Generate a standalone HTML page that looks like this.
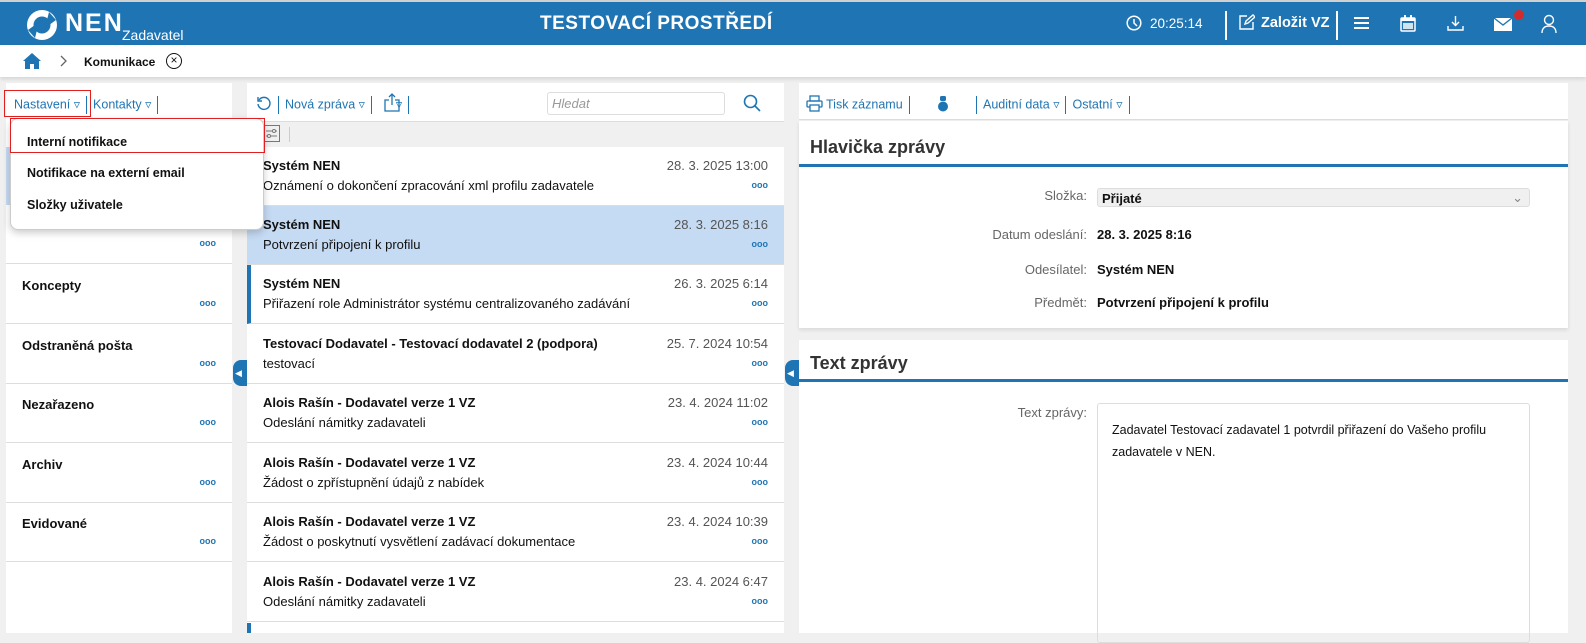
<!DOCTYPE html>
<html><head><meta charset="utf-8"><style>
*{box-sizing:border-box;margin:0;padding:0}
body{width:1586px;height:633px;overflow:hidden;background:#f0f0f0;font-family:"Liberation Sans",Arial,sans-serif;font-size:13px;color:#111;position:relative}
.abs{position:absolute}
.top{left:0;top:0;width:1586px;height:45px;background:#1f75b3;color:#fff;border-top:2px solid #d0d0d0}
.bc{left:0;top:45px;width:1586px;height:32px;background:#fff;box-shadow:0 2px 4px rgba(0,0,0,.12)}
.panel{background:#fff}
.link{color:#1f75b3}
.sep{display:inline-block;width:1px;height:18px;background:#1f75b3;vertical-align:middle;margin:0 6px}
.fold{left:6px;width:226px;height:59px;border-bottom:1px solid #ddd;background:#fff}
.fold b{position:absolute;left:16px;top:13px;font-size:13px}
.dots{position:absolute;color:#1f75b3;font-size:9px;font-weight:bold}
.msg{left:247px;width:537px;height:59px;border-bottom:1px solid #ddd;background:#fff}
.msg b{position:absolute;left:16px;top:11px}
.msg .d{position:absolute;right:16px;top:11px;color:#555}
.msg .s{position:absolute;left:16px;top:31px}
.lab{position:absolute;right:0;color:#666;text-align:right}
</style></head><body>
<div class="abs top">
 <svg class="abs" style="left:25px;top:6px" width="34" height="34" viewBox="0 0 34 34"><circle cx="17" cy="17" r="15" fill="#fff"/><circle cx="17" cy="17" r="8.5" fill="#1f75b3"/><path d="M3 22 L14 14 L10 30Z M31 12 L20 20 L24 4Z" fill="#1f75b3"/></svg>
 <div class="abs" style="left:65px;top:7px;font-size:25px;font-weight:bold;letter-spacing:2px">NEN</div>
 <div class="abs" style="left:122px;top:25px;font-size:14px">Zadavatel</div>
 <div class="abs" style="left:540px;top:11px;font-size:19px;font-weight:bold;letter-spacing:.5px">TESTOVACÍ PROSTŘEDÍ</div>
 <svg class="abs" style="left:1126px;top:13px" width="16" height="16" viewBox="0 0 16 16" fill="none" stroke="#fff" stroke-width="1.5"><circle cx="8" cy="8" r="6.8"/><path d="M8 4v4l3 3"/></svg>
 <div class="abs" style="left:1150px;top:14px;font-size:13.5px">20:25:14</div>
 <div class="abs" style="left:1225px;top:9px;width:2px;height:29px;background:#fff"></div>
 <svg class="abs" style="left:1238px;top:12px" width="17" height="17" viewBox="0 0 17 17" fill="none" stroke="#fff" stroke-width="1.4"><path d="M9 2H2v13h13V8"/><path d="M7 10l1-3 7-6 2 2-7 6z"/></svg>
 <div class="abs" style="left:1261px;top:13px;font-size:14.5px;font-weight:bold;white-space:nowrap">Založit VZ</div>
 <div class="abs" style="left:1336px;top:9px;width:2px;height:29px;background:#fff"></div>
 <div class="abs" style="left:1354px;top:15px;width:15px;height:2px;background:#fff;box-shadow:0 5px 0 #fff,0 10px 0 #fff"></div>
 <svg class="abs" style="left:1400px;top:13px" width="16" height="17" viewBox="0 0 16 17" fill="#fff"><rect x="1" y="3" width="14" height="13" rx="1" fill="none" stroke="#fff" stroke-width="1.5"/><rect x="1" y="3" width="14" height="3"/><rect x="4" y="0" width="2" height="4"/><rect x="10" y="0" width="2" height="4"/><rect x="3" y="8" width="10" height="6" fill="#fff" opacity=".8"/></svg>
 <svg class="abs" style="left:1447px;top:13px" width="17" height="17" viewBox="0 0 17 17" fill="none" stroke="#fff" stroke-width="1.4"><path d="M8.5 1v9M5 7l3.5 3.5L12 7M1 11v4h15v-4"/></svg>
 <svg class="abs" style="left:1494px;top:16px" width="18" height="13" viewBox="0 0 18 13"><rect width="18" height="13" fill="#fff"/><path d="M0 0l9 7 9-7" fill="none" stroke="#1f75b3" stroke-width="1.3"/></svg>
 <div class="abs" style="left:1514px;top:8px;width:10px;height:10px;border-radius:50%;background:#d32b2b"></div>
 <svg class="abs" style="left:1541px;top:12px" width="16" height="20" viewBox="0 0 16 20" fill="none" stroke="#fff" stroke-width="1.4"><circle cx="8" cy="6" r="4.5"/><path d="M1 19c0-5 3-7 7-7s7 2 7 7"/></svg>
</div>
<div class="abs bc">
 <svg class="abs" style="left:23px;top:8px" width="18" height="16" viewBox="0 0 18 16"><path d="M9 0L0 8h2v8h5v-5h4v5h5V8h2z" fill="#1f75b3"/></svg>
 <svg class="abs" style="left:60px;top:10px" width="8" height="12" viewBox="0 0 8 12" fill="none" stroke="#666" stroke-width="1.3"><path d="M1 1l5 5-5 5"/></svg>
 <div class="abs" style="left:84px;top:10px;font-weight:bold;font-size:12px">Komunikace</div>
 <div class="abs" style="left:166px;top:8px;width:16px;height:16px;border:1.5px solid #111;border-radius:50%;font-size:12px;text-align:center;line-height:12px">×</div>
</div>

<div class="abs panel" style="left:6px;top:83px;width:226px;height:550px"></div>
<div class="abs" style="left:4px;top:90px;width:87px;height:27px;border:1px solid #e02020"></div>
<div class="abs link" style="left:14px;top:96px;font-size:12.5px">Nastavení ▿<span class="sep"></span>Kontakty ▿<span class="sep"></span></div>
<div class="abs" style="left:6px;top:147px;width:226px;height:58px;background:#c5daf3"></div>
<div class="abs fold" style="top:205px"><span class="dots" style="right:16px;top:33px">ooo</span></div>
<div class="abs fold" style="top:265px"><b>Koncepty</b><span class="dots" style="right:16px;top:33px">ooo</span></div>
<div class="abs fold" style="top:325px"><b>Odstraněná pošta</b><span class="dots" style="right:16px;top:33px">ooo</span></div>
<div class="abs fold" style="top:384px"><b>Nezařazeno</b><span class="dots" style="right:16px;top:33px">ooo</span></div>
<div class="abs fold" style="top:444px"><b>Archiv</b><span class="dots" style="right:16px;top:33px">ooo</span></div>
<div class="abs fold" style="top:503px"><b>Evidované</b><span class="dots" style="right:16px;top:33px">ooo</span></div>

<div class="abs panel" style="left:247px;top:83px;width:537px;height:550px"></div>
<svg class="abs" style="left:256px;top:95px" width="16" height="16" viewBox="0 0 16 16" fill="none" stroke="#1f75b3" stroke-width="1.4"><path d="M3 5a6 6 0 1 1-1 4"/><path d="M2 2v4h4"/></svg>
<div class="abs link" style="left:278px;top:96px;font-size:12.5px"><span class="sep" style="margin-left:0"></span>Nová zpráva ▿<span class="sep"></span><span style="display:inline-block;width:18px"></span>▿<span class="sep"></span></div>
<svg class="abs" style="left:384px;top:93px" width="16" height="19" viewBox="0 0 16 19" fill="none" stroke="#1f75b3" stroke-width="1.3"><path d="M5 7H1v11h14V7h-4M8 12V1M5 4l3-3 3 3"/></svg>
<div class="abs" style="left:547px;top:92px;width:178px;height:23px;border:1px solid #ddd;border-radius:3px;color:#999;font-style:italic;padding:3px 4px">Hledat</div>
<svg class="abs" style="left:743px;top:94px" width="18" height="18" viewBox="0 0 18 18" fill="none" stroke="#1f75b3" stroke-width="1.6"><circle cx="7.5" cy="7.5" r="6"/><path d="M12 12l5 5"/></svg>
<div class="abs" style="left:247px;top:121px;width:537px;height:26px;background:#f0f0f0;border-top:1px solid #ddd"></div>
<svg class="abs" style="left:263px;top:125px" width="17" height="17" viewBox="0 0 17 17" fill="none" stroke="#777" stroke-width="1"><rect x=".5" y=".5" width="16" height="16"/><path d="M3 6h11M3 11h11"/><circle cx="11" cy="6" r="1.5" fill="#fff"/><circle cx="6" cy="11" r="1.5" fill="#fff"/></svg>
<div class="abs" style="left:289px;top:127px;width:1px;height:15px;background:#ccc"></div>
<div class="abs msg" style="top:147px"><b>Systém NEN</b><span class="d">28. 3. 2025 13:00</span><span class="s">Oznámení o dokončení zpracování xml profilu zadavatele</span><span class="dots" style="right:16px;top:33px">ooo</span></div>
<div class="abs msg" style="top:206px;background:#c5daf3"><b>Systém NEN</b><span class="d">28. 3. 2025 8:16</span><span class="s">Potvrzení připojení k profilu</span><span class="dots" style="right:16px;top:33px">ooo</span></div>
<div class="abs msg" style="top:265px;border-left:4px solid #1f75b3"><b style="left:12px">Systém NEN</b><span class="d">26. 3. 2025 6:14</span><span class="s" style="left:12px">Přiřazení role Administrátor systému centralizovaného zadávání</span><span class="dots" style="right:16px;top:33px">ooo</span></div>
<div class="abs msg" style="top:325px"><b>Testovací Dodavatel - Testovací dodavatel 2 (podpora)</b><span class="d">25. 7. 2024 10:54</span><span class="s">testovací</span><span class="dots" style="right:16px;top:33px">ooo</span></div>
<div class="abs msg" style="top:384px"><b>Alois Rašín - Dodavatel verze 1 VZ</b><span class="d">23. 4. 2024 11:02</span><span class="s">Odeslání námitky zadavateli</span><span class="dots" style="right:16px;top:33px">ooo</span></div>
<div class="abs msg" style="top:444px"><b>Alois Rašín - Dodavatel verze 1 VZ</b><span class="d">23. 4. 2024 10:44</span><span class="s">Žádost o zpřístupnění údajů z nabídek</span><span class="dots" style="right:16px;top:33px">ooo</span></div>
<div class="abs msg" style="top:503px"><b>Alois Rašín - Dodavatel verze 1 VZ</b><span class="d">23. 4. 2024 10:39</span><span class="s">Žádost o poskytnutí vysvětlení zadávací dokumentace</span><span class="dots" style="right:16px;top:33px">ooo</span></div>
<div class="abs msg" style="top:563px"><b>Alois Rašín - Dodavatel verze 1 VZ</b><span class="d">23. 4. 2024 6:47</span><span class="s">Odeslání námitky zadavateli</span><span class="dots" style="right:16px;top:33px">ooo</span></div>
<div class="abs" style="left:247px;top:623px;width:4px;height:10px;background:#1f75b3"></div>

<div class="abs" style="left:233px;top:360px;width:14px;height:26px;background:#1f75b3;border-radius:8px 0 0 8px;color:#fff;font-size:9px;line-height:26px;padding-left:2px">◀</div>
<div class="abs" style="left:785px;top:360px;width:14px;height:26px;background:#1f75b3;border-radius:8px 0 0 8px;color:#fff;font-size:9px;line-height:26px;padding-left:2px">◀</div>

<div class="abs" style="left:10px;top:118px;width:254px;height:112px;background:#fff;border:1px solid #ccc;border-radius:8px;box-shadow:0 3px 8px rgba(0,0,0,.2)"></div>
<div class="abs" style="left:10px;top:118px;width:255px;height:35px;border:1px solid #e02020"></div>
<div class="abs" style="left:27px;top:135px;font-weight:bold;font-size:12.5px">Interní notifikace</div>
<div class="abs" style="left:27px;top:166px;font-weight:bold;font-size:12.5px">Notifikace na externí email</div>
<div class="abs" style="left:27px;top:198px;font-weight:bold;font-size:12.5px">Složky uživatele</div>

<div class="abs panel" style="left:799px;top:83px;width:769px;height:37px;border-bottom:1px solid #ddd"></div>
<svg class="abs" style="left:806px;top:95px" width="17" height="17" viewBox="0 0 17 17" fill="none" stroke="#1f75b3" stroke-width="1.3"><rect x="4" y="1" width="9" height="5"/><rect x="1" y="6" width="15" height="6" rx="1"/><rect x="4" y="10" width="9" height="6" fill="#fff"/></svg>
<div class="abs link" style="left:826px;top:96px;font-size:12.5px">Tisk záznamu<span class="sep"></span></div>
<svg class="abs" style="left:937px;top:95px" width="12" height="17" viewBox="0 0 12 17"><rect x="3" y="1" width="6" height="5" rx="1.5" fill="#1f75b3"/><circle cx="6" cy="11.5" r="5" fill="#1f75b3"/></svg>
<div class="abs link" style="left:970px;top:96px;font-size:12.5px"><span class="sep"></span>Auditní data ▿<span class="sep"></span>Ostatní ▿<span class="sep"></span></div>
<div class="abs panel" style="left:799px;top:121px;width:769px;height:207px;box-shadow:0 2px 4px rgba(0,0,0,.1)"></div>
<div class="abs" style="left:810px;top:137px;font-size:18px;font-weight:bold;color:#333">Hlavička zprávy</div>
<div class="abs" style="left:799px;top:164px;width:769px;height:3px;background:#1f75b3"></div>
<div class="abs" style="left:900px;top:188px;width:187px;height:16px"><span class="lab">Složka:</span></div>
<div class="abs" style="left:1097px;top:188px;width:433px;height:19px;background:#f0f0f0;border:1px solid #ddd;border-radius:3px;padding:2px 4px;font-weight:bold">Přijaté<span style="position:absolute;right:6px;top:1px;color:#888;font-weight:normal">⌄</span></div>
<div class="abs" style="left:900px;top:227px;width:187px;height:16px"><span class="lab">Datum odeslání:</span></div>
<div class="abs" style="left:1097px;top:227px;font-weight:bold">28. 3. 2025 8:16</div>
<div class="abs" style="left:900px;top:262px;width:187px;height:16px"><span class="lab">Odesílatel:</span></div>
<div class="abs" style="left:1097px;top:262px;font-weight:bold">Systém NEN</div>
<div class="abs" style="left:900px;top:295px;width:187px;height:16px"><span class="lab">Předmět:</span></div>
<div class="abs" style="left:1097px;top:295px;font-weight:bold">Potvrzení připojení k profilu</div>
<div class="abs panel" style="left:799px;top:340px;width:769px;height:293px"></div>
<div class="abs" style="left:810px;top:353px;font-size:18px;font-weight:bold;color:#333">Text zprávy</div>
<div class="abs" style="left:799px;top:379px;width:769px;height:3px;background:#1f75b3"></div>
<div class="abs" style="left:900px;top:405px;width:187px;height:16px"><span class="lab">Text zprávy:</span></div>
<div class="abs" style="left:1097px;top:403px;width:433px;height:240px;border:1px solid #ddd;border-radius:3px;padding:15px 14px;font-size:12.5px;line-height:22px">Zadavatel Testovací zadavatel 1 potvrdil přiřazení do Vašeho profilu zadavatele v NEN.</div>
</body></html>
